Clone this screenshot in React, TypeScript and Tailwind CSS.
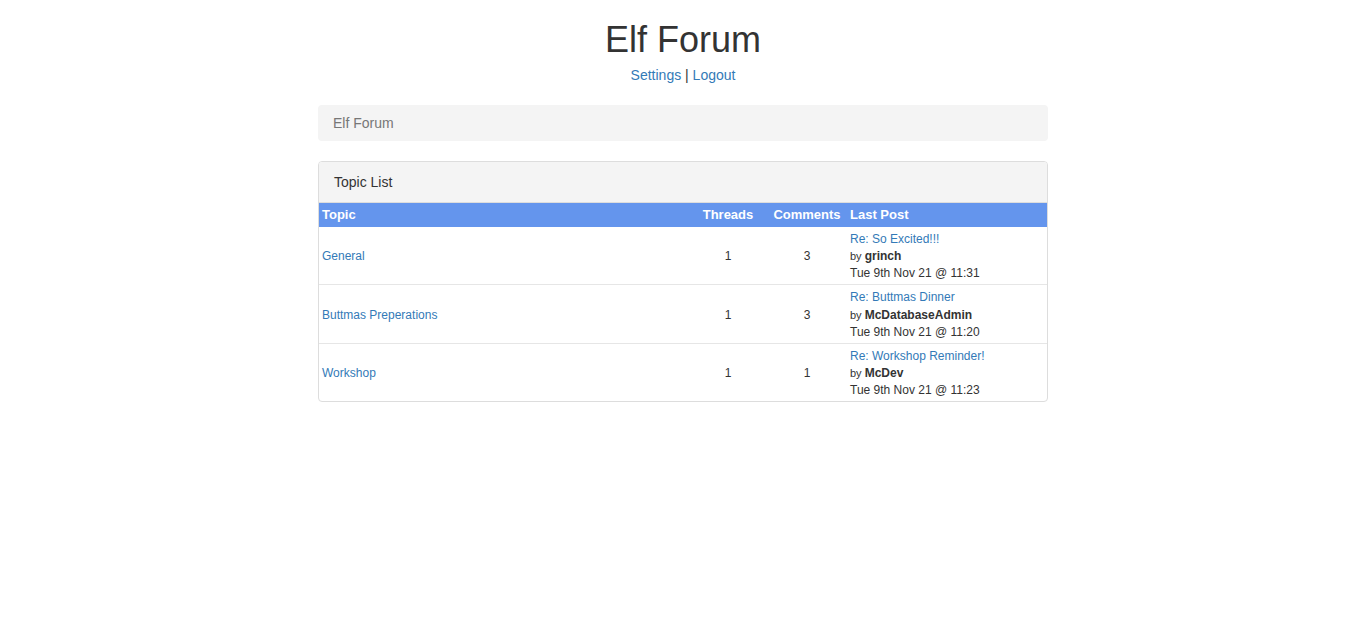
const topics = [
  { name: "General", threads: 1, comments: 3, post: "Re: So Excited!!!", by: "grinch", date: "Tue 9th Nov 21 @ 11:31" },
  { name: "Buttmas Preperations", threads: 1, comments: 3, post: "Re: Buttmas Dinner", by: "McDatabaseAdmin", date: "Tue 9th Nov 21 @ 11:20" },
  { name: "Workshop", threads: 1, comments: 1, post: "Re: Workshop Reminder!", by: "McDev", date: "Tue 9th Nov 21 @ 11:23" },
];

export default function App() {
  return (
    <div className="min-h-screen bg-white text-[#333] text-sm font-['Liberation_Sans',Arial,sans-serif]">
      <div className="mx-auto w-[730px] pt-[20px]">
        <h1 className="text-center text-[36px] leading-[40px] font-normal">Elf Forum</h1>
        <p className="mt-[5px] text-center text-[14px] leading-5">
          <a href="#" className="text-[#337ab7]">Settings</a> | <a href="#" className="text-[#337ab7]">Logout</a>
        </p>

        <div className="mt-[20px] rounded bg-[#f4f4f4] px-[15px] py-2 leading-5 text-[#777]">Elf Forum</div>

        <div className="mt-[20px] overflow-hidden rounded border border-[#ddd]">
          <div className="border-b border-[#ddd] bg-[#f4f4f4] px-[15px] py-[10px] leading-5">Topic List</div>
          <table className="w-full border-collapse text-[12px] leading-[1.42857]">
            <thead>
              <tr className="bg-[#6495ed] text-[13px] leading-[18px] font-bold text-white">
                <th className="p-[3px] text-left">Topic</th>
                <th className="w-[80px] p-[3px] text-center">Threads</th>
                <th className="w-[78px] p-[3px] text-center">Comments</th>
                <th className="w-[201px] py-[3px] pl-[4px] pr-[3px] text-left">Last Post</th>
              </tr>
            </thead>
            <tbody>
              {topics.map((t, i) => (
                <tr key={t.name} className={i > 0 ? "border-t border-[#e6e6e6]" : ""}>
                  <td className="pt-[4px] pb-[2px] px-[3px]"><a href="#" className="text-[#337ab7]">{t.name}</a></td>
                  <td className="pt-[4px] pb-[2px] px-[3px] text-center">{t.threads}</td>
                  <td className="pt-[4px] pb-[2px] px-[3px] text-center">{t.comments}</td>
                  <td className="pt-[4px] pb-[2px] pl-[4px] pr-[3px]">
                    <a href="#" className="block text-[#337ab7]">{t.post}</a>
                    <div><span className="text-[11px]">by </span><b>{t.by}</b></div>
                    <div>{t.date}</div>
                  </td>
                </tr>
              ))}
            </tbody>
          </table>
        </div>
      </div>
    </div>
  );
}
